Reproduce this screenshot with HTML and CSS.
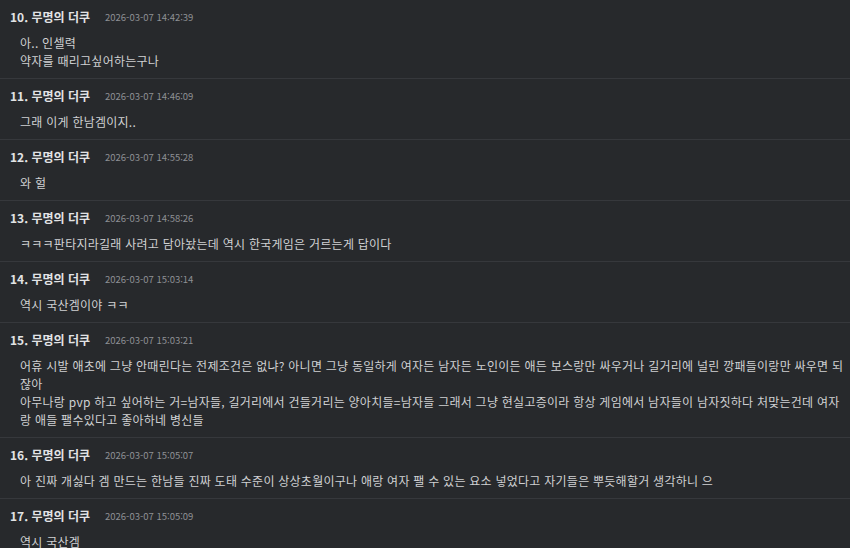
FILE: index.html
```html
<!DOCTYPE html>
<html lang="ko">
<head>
<meta charset="utf-8">
<link rel="stylesheet" href="styles.css">
</head>
<body>
<div class="list">
  <div class="item">
    <div class="head"><span class="name">10. 무명의 더쿠</span><span class="date">2026-03-07 14:42:39</span></div>
    <div class="body">아.. 인셀력<br>약자를 때리고싶어하는구나</div>
  </div>
  <div class="item">
    <div class="head"><span class="name">11. 무명의 더쿠</span><span class="date">2026-03-07 14:46:09</span></div>
    <div class="body">그래 이게 한남겜이지..</div>
  </div>
  <div class="item">
    <div class="head"><span class="name">12. 무명의 더쿠</span><span class="date">2026-03-07 14:55:28</span></div>
    <div class="body">와 헐</div>
  </div>
  <div class="item">
    <div class="head"><span class="name">13. 무명의 더쿠</span><span class="date">2026-03-07 14:58:26</span></div>
    <div class="body">ㅋㅋㅋ판타지라길래 사려고 담아놨는데 역시 한국게임은 거르는게 답이다</div>
  </div>
  <div class="item">
    <div class="head"><span class="name">14. 무명의 더쿠</span><span class="date">2026-03-07 15:03:14</span></div>
    <div class="body">역시 국산겜이야 ㅋㅋ</div>
  </div>
  <div class="item">
    <div class="head"><span class="name">15. 무명의 더쿠</span><span class="date">2026-03-07 15:03:21</span></div>
    <div class="body">어휴 시발 애초에 그냥 안때린다는 전제조건은 없냐? 아니면 그냥 동일하게 여자든 남자든 노인이든 애든 보스랑만 싸우거나 길거리에 널린 깡패들이랑만 싸우면 되잖아<br>아무나랑 pvp 하고 싶어하는 거=남자들, 길거리에서 건들거리는 양아치들=남자들 그래서 그냥 현실고증이라 항상 게임에서 남자들이 남자짓하다 처맞는건데 여자랑 애들 팰수있다고 좋아하네 병신들</div>
  </div>
  <div class="item">
    <div class="head"><span class="name">16. 무명의 더쿠</span><span class="date">2026-03-07 15:05:07</span></div>
    <div class="body">아 진짜 개싫다 겜 만드는 한남들 진짜 도태 수준이 상상초월이구나 애랑 여자 팰 수 있는 요소 넣었다고 자기들은 뿌듯해할거 생각하니 으</div>
  </div>
  <div class="item">
    <div class="head"><span class="name">17. 무명의 더쿠</span><span class="date">2026-03-07 15:05:09</span></div>
    <div class="body">역시 국산겜</div>
  </div>
</div>
</body>
</html>
```

FILE: styles.css
```css
html, body {
  margin: 0;
  padding: 0;
  background: #27292c;
}
body {
  font-family: "Noto Sans CJK KR", "Noto Sans", sans-serif;
  color: #d2d3d5;
  width: 850px;
  height: 548px;
  overflow: hidden;
}
.list {
  display: flex;
  flex-direction: column;
}
.item {
  padding: 9px 0 8px 10px;
  border-bottom: 1px solid #36383c;
}
.head {
  display: flex;
  align-items: center;
  gap: 15px;
  height: 16px;
  line-height: 16px;
}
.name {
  font-size: 12px;
  font-weight: 700;
  color: #e2e3e5;
}
.date {
  font-size: 9.5px;
  color: #8e9094;
}
.body {
  margin-top: 9px;
  padding-left: 10px;
  padding-right: 6px;
  font-size: 12px;
  line-height: 18px;
  letter-spacing: 0.25px;
  color: #d0d1d3;
}
```
